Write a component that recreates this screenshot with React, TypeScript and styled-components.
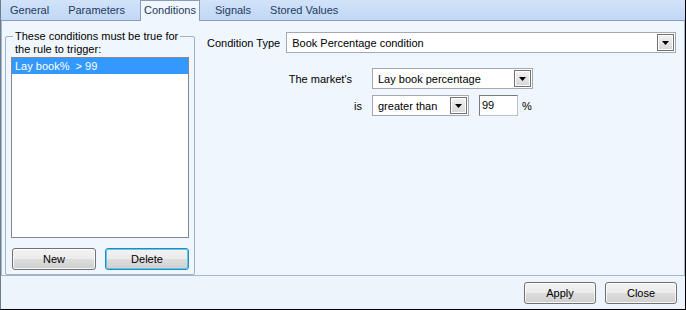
import styled, { createGlobalStyle } from "styled-components";

const GlobalStyle = createGlobalStyle`
  body {
    margin: 0;
    overflow: hidden;
    font-family: "Liberation Sans", Arial, sans-serif;
    font-size: 11px;
  }
`;

const tabs = ["General", "Parameters", "Conditions", "Signals", "Stored Values"];

const DropButton = () => (
  <DropBtn>
    <svg width="7" height="4" viewBox="0 0 7 4">
      <path d="M0 0h7L3.5 4z" fill="#000" />
    </svg>
  </DropBtn>
);

type ComboProps = { value: string; width?: number };

const Combo = ({ value, width }: ComboProps) => (
  <ComboBox style={width ? { width } : undefined}>
    <ComboText>{value}</ComboText>
    <DropButton />
  </ComboBox>
);

export default function App() {
  return (
    <>
      <GlobalStyle />
      <Window>
        <TabStrip>
          {tabs.map((t) => (
            <Tab key={t} $active={t === "Conditions"}>
              {t}
            </Tab>
          ))}
        </TabStrip>
        <TabPage>
          <Group>
            <Legend>These conditions must be true for</Legend>
            <Caption>the rule to trigger:</Caption>
            <List>
              <Item $selected>{"Lay book%  > 99"}</Item>
            </List>
            <ButtonRow>
              <Button>New</Button>
              <Button $focused>Delete</Button>
            </ButtonRow>
          </Group>
          <Editor>
            <TypeRow>
              <Label>Condition Type</Label>
              <ComboBox $grow>
                <ComboText>Book Percentage condition</ComboText>
                <DropButton />
              </ComboBox>
            </TypeRow>
            <Form>
              <FormLabel $inset={10}>The market's</FormLabel>
              <Combo value="Lay book percentage" width={161} />
              <FormLabel>is</FormLabel>
              <Inline>
                <Combo value="greater than" width={97} />
                <NumberBox>99</NumberBox>
                <Unit>%</Unit>
              </Inline>
            </Form>
          </Editor>
        </TabPage>
        <Footer>
          <Button $wide>Apply</Button>
          <Button $wide>Close</Button>
        </Footer>
      </Window>
    </>
  );
}

const Window = styled.div`
  width: 686px;
  height: 310px;
  box-sizing: border-box;
  display: flex;
  flex-direction: column;
  background: #eef4fc;
  border-left: 1px solid #6f7c8c;
  border-right: 1px solid #000;
  border-bottom: 1px solid #000;
`;

const TabStrip = styled.div`
  height: 20px;
  flex: none;
  display: flex;
  align-items: flex-end;
  gap: 11px;
  padding-left: 5px;
  background: linear-gradient(#d2e3f9, #c0d7f5);
  border-bottom: 1px solid #8a9db5;
`;

const Tab = styled.div<{ $active?: boolean }>`
  height: ${({ $active }) => ($active ? "20px" : "19px")};
  line-height: ${({ $active }) => ($active ? "20px" : "19px")};
  padding: 0 4px;
  box-sizing: border-box;
  color: #1e3a60;
  white-space: nowrap;
  ${({ $active }) =>
    $active &&
    `
    background: #f0f6fe;
    border: 1px solid #8a9db5;
    border-bottom: none;
    margin-bottom: -1px;
    height: 21px;
    line-height: 19px;
    padding: 0 3px;
  `}
`;

const TabPage = styled.div`
  flex: 1;
  display: flex;
  align-items: flex-start;
  padding: 9px 8px 0 3px;
  background: #f0f6fe;
  border-left: 1px solid #a3b6cd;
  border-right: 1px solid #a3b6cd;
  border-bottom: 1px solid #a3b6cd;
`;

const Group = styled.fieldset`
  margin: 0;
  width: 190px;
  height: 245px;
  box-sizing: border-box;
  padding: 0 5px 4px 5px;
  border: 1px solid #9fb2c9;
  border-radius: 2px;
  display: flex;
  flex-direction: column;
`;

const Legend = styled.legend`
  padding: 0 2px;
  margin-left: 2px;
  line-height: 13px;
  color: #000;
`;

const Caption = styled.div`
  padding-left: 4px;
  line-height: 13px;
  margin-bottom: 1px;
  color: #000;
`;

const List = styled.div`
  height: 181px;
  flex: none;
  box-sizing: border-box;
  border: 1px solid #828790;
  background: #fff;
  padding: 0;
`;

const Item = styled.div<{ $selected?: boolean }>`
  height: 16px;
  line-height: 16px;
  padding-left: 3px;
  white-space: pre;
  background: ${({ $selected }) => ($selected ? "#3399ff" : "transparent")};
  color: ${({ $selected }) => ($selected ? "#fff" : "#000")};
`;

const ButtonRow = styled.div`
  display: flex;
  gap: 9px;
  margin-top: auto;
  padding-left: 1px;
`;

const Button = styled.div<{ $focused?: boolean; $wide?: boolean }>`
  width: ${({ $wide }) => ($wide ? "72px" : "84px")};
  height: 22px;
  box-sizing: border-box;
  display: flex;
  align-items: center;
  justify-content: center;
  color: #000;
  border-radius: 3px;
  border: 1px solid ${({ $focused }) => ($focused ? "#3c7fb1" : "#707070")};
  background: linear-gradient(#f2f2f2 0%, #ebebeb 50%, #dddddd 51%, #cfcfcf 100%);
  box-shadow: inset 0 0 0 1px
    ${({ $focused }) => ($focused ? "#48d2f9" : "rgba(255,255,255,0.8)")};
`;

const Editor = styled.div`
  flex: 1;
  margin-left: 12px;
  margin-top: 2px;
  display: flex;
  flex-direction: column;
`;

const TypeRow = styled.div`
  display: flex;
  align-items: center;
  gap: 6px;
`;

const Label = styled.span`
  color: #000;
  white-space: nowrap;
`;

const ComboBox = styled.div<{ $grow?: boolean }>`
  ${({ $grow }) => ($grow ? "flex: 1;" : "")}
  height: 21px;
  box-sizing: border-box;
  display: flex;
  align-items: center;
  background: #fff;
  border: 1px solid #a4a9b1;
  padding: 0 1px 0 5px;
`;

const ComboText = styled.span`
  flex: 1;
  color: #000;
  white-space: nowrap;
  overflow: hidden;
`;

const DropBtn = styled.div`
  width: 17px;
  height: 17px;
  box-sizing: border-box;
  display: flex;
  align-items: center;
  justify-content: center;
  border: 1px solid #707070;
  background: linear-gradient(#f3f3f3, #d6d6d6);
  box-shadow: inset 0 0 0 1px #fff;
`;

const Form = styled.div`
  display: grid;
  grid-template-columns: 75px auto;
  column-gap: 10px;
  row-gap: 6px;
  margin-top: 15px;
  margin-left: 80px;
  align-items: center;
  justify-content: start;
`;

const FormLabel = styled.span<{ $inset?: number }>`
  justify-self: end;
  padding-right: ${({ $inset }) => $inset ?? 0}px;
  color: #000;
  white-space: nowrap;
`;

const Inline = styled.div`
  display: flex;
  align-items: center;
`;

const NumberBox = styled.div`
  width: 39px;
  height: 21px;
  box-sizing: border-box;
  margin-left: 10px;
  padding-left: 2px;
  line-height: 19px;
  background: #fff;
  border: 1px solid #b9c0c8;
  border-top-color: #7a7a7a;
  border-left-color: #7a7a7a;
  color: #000;
`;

const Unit = styled.span`
  margin-left: 4px;
  color: #000;
`;

const Footer = styled.div`
  height: 33px;
  flex: none;
  box-sizing: border-box;
  display: flex;
  justify-content: flex-end;
  align-items: flex-start;
  gap: 9px;
  padding: 6px 8px 0 0;
  background: #eef4fc;
`;
